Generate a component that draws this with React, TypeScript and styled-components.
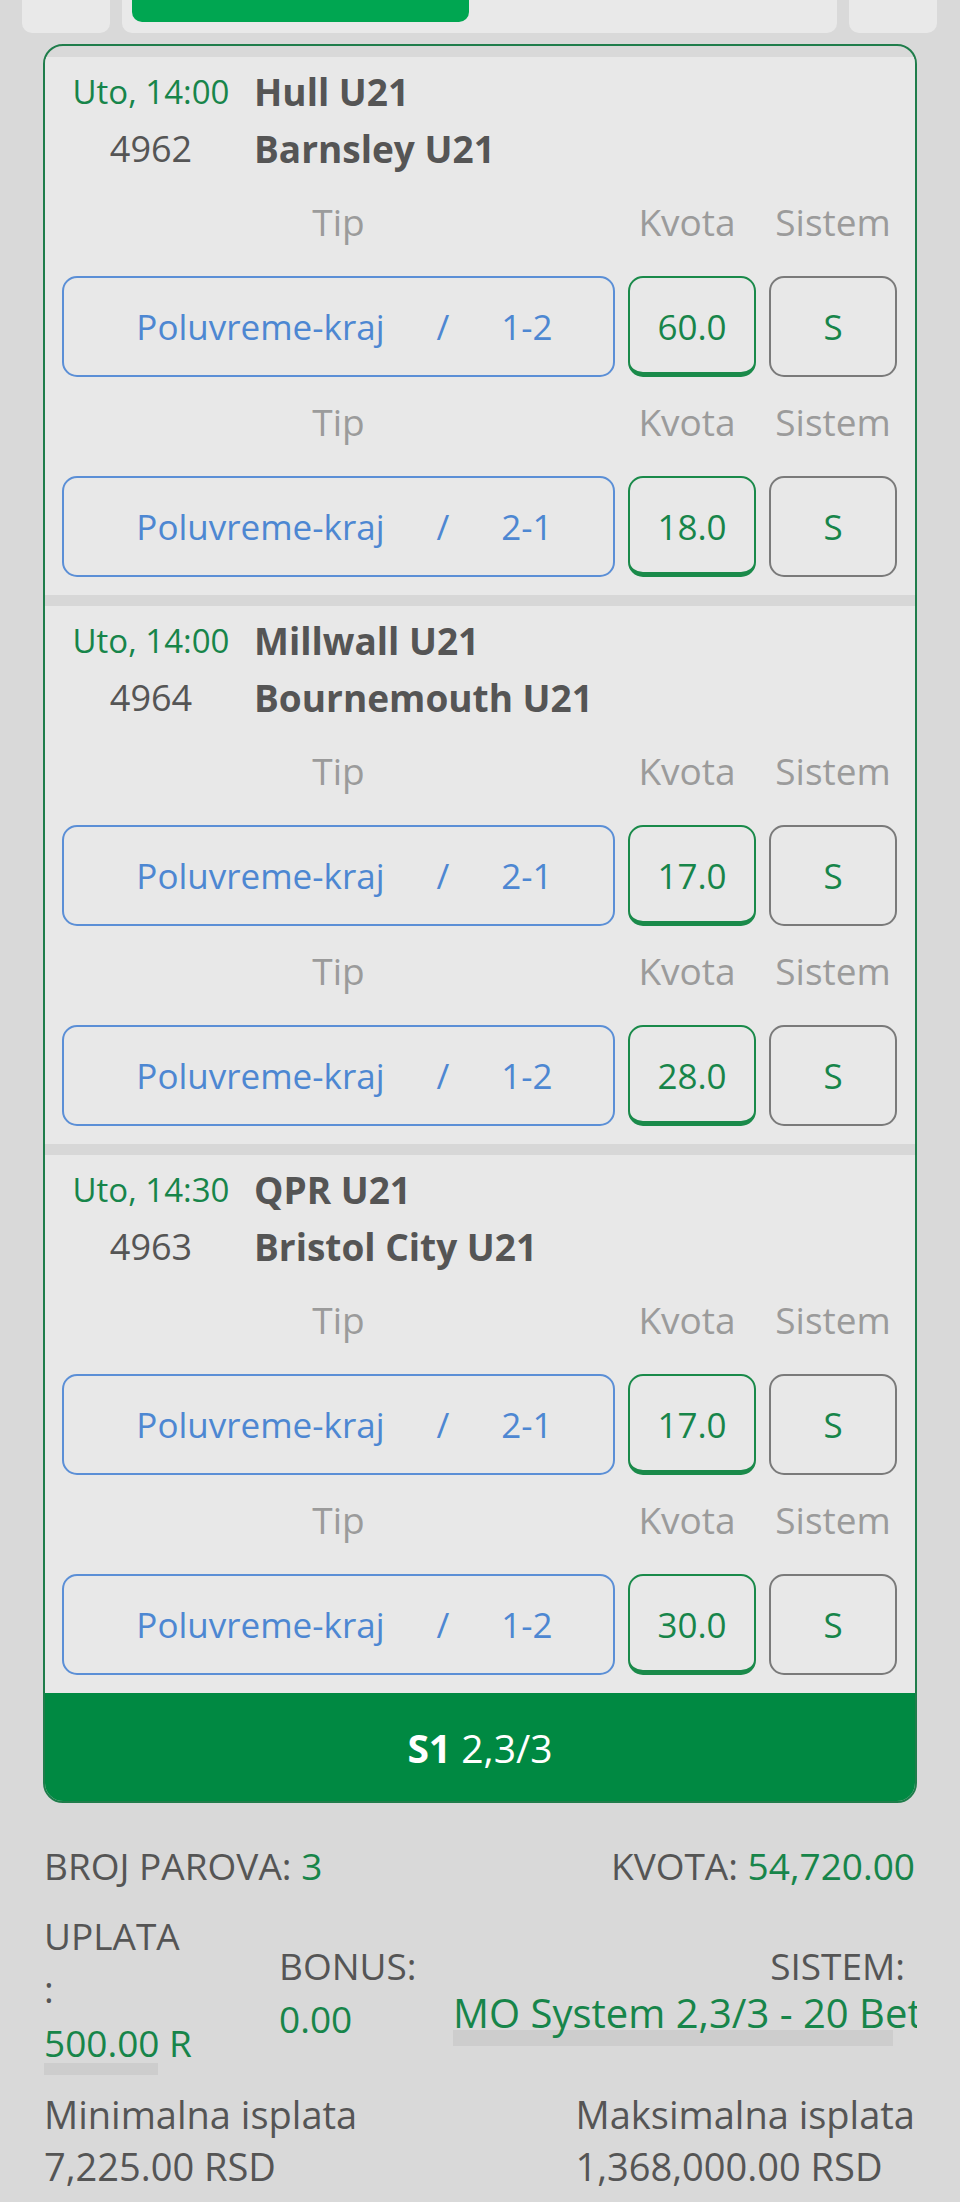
import styled, { createGlobalStyle } from 'styled-components'

const GlobalStyle = createGlobalStyle`
  html, body {
    margin: 0;
    padding: 0;
    background: #d9d9d9;
  }
  body {
    font-family: "Open Sans", "Noto Sans", sans-serif;
    color: #555555;
    min-height: 2202px;
  }
`

type Bet = { tip: string; odd: string }
type Match = { time: string; code: string; home: string; away: string; bets: Bet[] }

const matches: Match[] = [
  {
    time: 'Uto, 14:00', code: '4962', home: 'Hull U21', away: 'Barnsley U21',
    bets: [{ tip: '1-2', odd: '60.0' }, { tip: '2-1', odd: '18.0' }],
  },
  {
    time: 'Uto, 14:00', code: '4964', home: 'Millwall U21', away: 'Bournemouth U21',
    bets: [{ tip: '2-1', odd: '17.0' }, { tip: '1-2', odd: '28.0' }],
  },
  {
    time: 'Uto, 14:30', code: '4963', home: 'QPR U21', away: 'Bristol City U21',
    bets: [{ tip: '2-1', odd: '17.0' }, { tip: '1-2', odd: '30.0' }],
  },
]

export default function App() {
  return (
    <>
      <GlobalStyle />
      <TabBar>
        <SideTab />
        <MainTab>
          <ActivePill />
        </MainTab>
        <SideTab />
      </TabBar>

      <Ticket>
        {matches.map((m) => (
          <MatchBlock key={m.code}>
            <MatchHead>
              <Time>{m.time}</Time>
              <Team>{m.home}</Team>
              <Code>{m.code}</Code>
              <Team>{m.away}</Team>
            </MatchHead>
            {m.bets.map((b, i) => (
              <div key={i}>
                <ColumnLabels>
                  <span>Tip</span>
                  <span>Kvota</span>
                  <span>Sistem</span>
                </ColumnLabels>
                <BetRow>
                  <TipBox>
                    <span>Poluvreme-kraj</span>
                    <span>/</span>
                    <span>{b.tip}</span>
                  </TipBox>
                  <OddBox>{b.odd}</OddBox>
                  <SystemBox>S</SystemBox>
                </BetRow>
              </div>
            ))}
          </MatchBlock>
        ))}
        <TicketFooter>
          <b>S1</b> 2,3/3
        </TicketFooter>
      </Ticket>

      <Summary>
        <SummaryRow>
          <span>BROJ PAROVA: <Green>3</Green></span>
          <span>KVOTA: <Green>54,720.00</Green></span>
        </SummaryRow>

        <StakeRow>
          <StakeCol>
            <StakeLabel>UPLATA :</StakeLabel>
            <FieldValue $barWidth={114}>500.00 R</FieldValue>
          </StakeCol>
          <BonusCol>
            <div>BONUS:</div>
            <Green>0.00</Green>
          </BonusCol>
          <SystemCol>
            <SystemLabel>SISTEM:</SystemLabel>
            <SystemSelect>MO System 2,3/3 - 20 Bet</SystemSelect>
          </SystemCol>
        </StakeRow>

        <PayoutRow>
          <div>
            <div>Minimalna isplata</div>
            <div>7,225.00 RSD</div>
          </div>
          <div>
            <div>Maksimalna isplata</div>
            <div>1,368,000.00 RSD</div>
          </div>
        </PayoutRow>
      </Summary>
    </>
  )
}

const TabBar = styled('div')`
  display: flex;
  gap: 12px;
  height: 33px;
  padding: 0 23px 0 22px;
`

const SideTab = styled('div')`
  width: 88px;
  background: #e9e9e9;
  border-radius: 0 0 10px 10px;
`

const MainTab = styled('div')`
  flex: 1;
  background: #e9e9e9;
  border-radius: 0 0 10px 10px;
  padding: 0 10px;
`

const ActivePill = styled('div')`
  width: 337px;
  height: 22px;
  background: #00a651;
  border-radius: 0 0 10px 10px;
`

const Ticket = styled('section')`
  margin: 11px 43px 0;
  border: 2px solid #1f7d4b;
  border-radius: 20px;
  overflow: hidden;
  padding-top: 11px;
`

const MatchBlock = styled('div')`
  background: #e8e8e8;
  padding: 6px 18px 18px 17px;

  & + & {
    border-top: 11px solid #d7d7d7;
  }
`

const MatchHead = styled('div')`
  display: grid;
  grid-template-columns: 178px 1fr;
  column-gap: 14px;
  line-height: 57px;
`

const Time = styled('div')`
  font-size: 33px;
  color: #17854a;
  text-align: center;
`

const Code = styled('div')`
  font-size: 36px;
  color: #555555;
  text-align: center;
`

const Team = styled('div')`
  font-size: 37px;
  font-weight: 700;
  color: #555555;
  white-space: nowrap;
`

const columns = `
  display: grid;
  grid-template-columns: 1fr 128px 128px;
  column-gap: 13px;
`

const ColumnLabels = styled('div')`
  ${columns}
  padding-top: 20px;
  margin-bottom: 29px;
  line-height: 50px;
  font-size: 37px;
  color: #9b9b9b;
  text-align: center;

  span:nth-child(2) {
    margin-left: -10px;
  }
`

const BetRow = styled('div')`
  ${columns}
  height: 101px;
`

const Box = styled('div')`
  box-sizing: border-box;
  display: flex;
  align-items: center;
  justify-content: center;
  border-radius: 15px;
  font-size: 35px;
  color: #17854a;
`

const TipBox = styled(Box)`
  border: 2px solid #5b8fd6;
  color: #4d87d2;
  gap: 52px;
  padding-left: 12px;
`

const OddBox = styled(Box)`
  border: 2px solid #1a8a4a;
  border-bottom-width: 5px;
  padding-top: 3px;
`

const SystemBox = styled(Box)`
  border: 2px solid #7a7a7a;
`

const TicketFooter = styled('div')`
  height: 108px;
  background: #008942;
  color: #ffffff;
  font-size: 39px;
  display: flex;
  align-items: center;
  justify-content: center;
  white-space: pre;

  b {
    font-weight: 700;
  }
`

const Summary = styled('section')`
  padding: 37px 45px 0 44px;
  font-size: 37px;
  color: #555555;
`

const Green = styled('span')`
  color: #17854a;
`

const SummaryRow = styled('div')`
  display: flex;
  justify-content: space-between;
  line-height: 52px;
`

const StakeRow = styled('div')`
  display: grid;
  grid-template-columns: 235px 174px 1fr;
  align-items: center;
  margin-top: 17px;
  line-height: 53px;
`

const StakeCol = styled('div')`
  display: flex;
  flex-direction: column;
`

const StakeLabel = styled('div')`
  width: 150px;
`

const FieldValue = styled('div')<{ $barWidth: number }>`
  width: ${({ $barWidth }) => $barWidth}px;
  white-space: nowrap;
  color: #17854a;
  line-height: 40px;
  padding-top: 8px;
  border-bottom: 12px solid #cdcdcd;
`

const BonusCol = styled('div')`
  display: flex;
  flex-direction: column;
`

const SystemCol = styled('div')`
  display: flex;
  flex-direction: column;
  margin-right: -2px;
  overflow: hidden;
`

const SystemLabel = styled('div')`
  text-align: right;
  padding-right: 12px;
`

const SystemSelect = styled('div')`
  white-space: nowrap;
  color: #17854a;
  font-size: 40px;
  line-height: 42px;
  margin-right: 24px;
  border-bottom: 16px solid #cdcdcd;
  height: 38px;
  overflow: visible;
`

const PayoutRow = styled('div')`
  display: flex;
  justify-content: space-between;
  margin-top: 13px;
  line-height: 52px;
  font-size: 38px;
`
